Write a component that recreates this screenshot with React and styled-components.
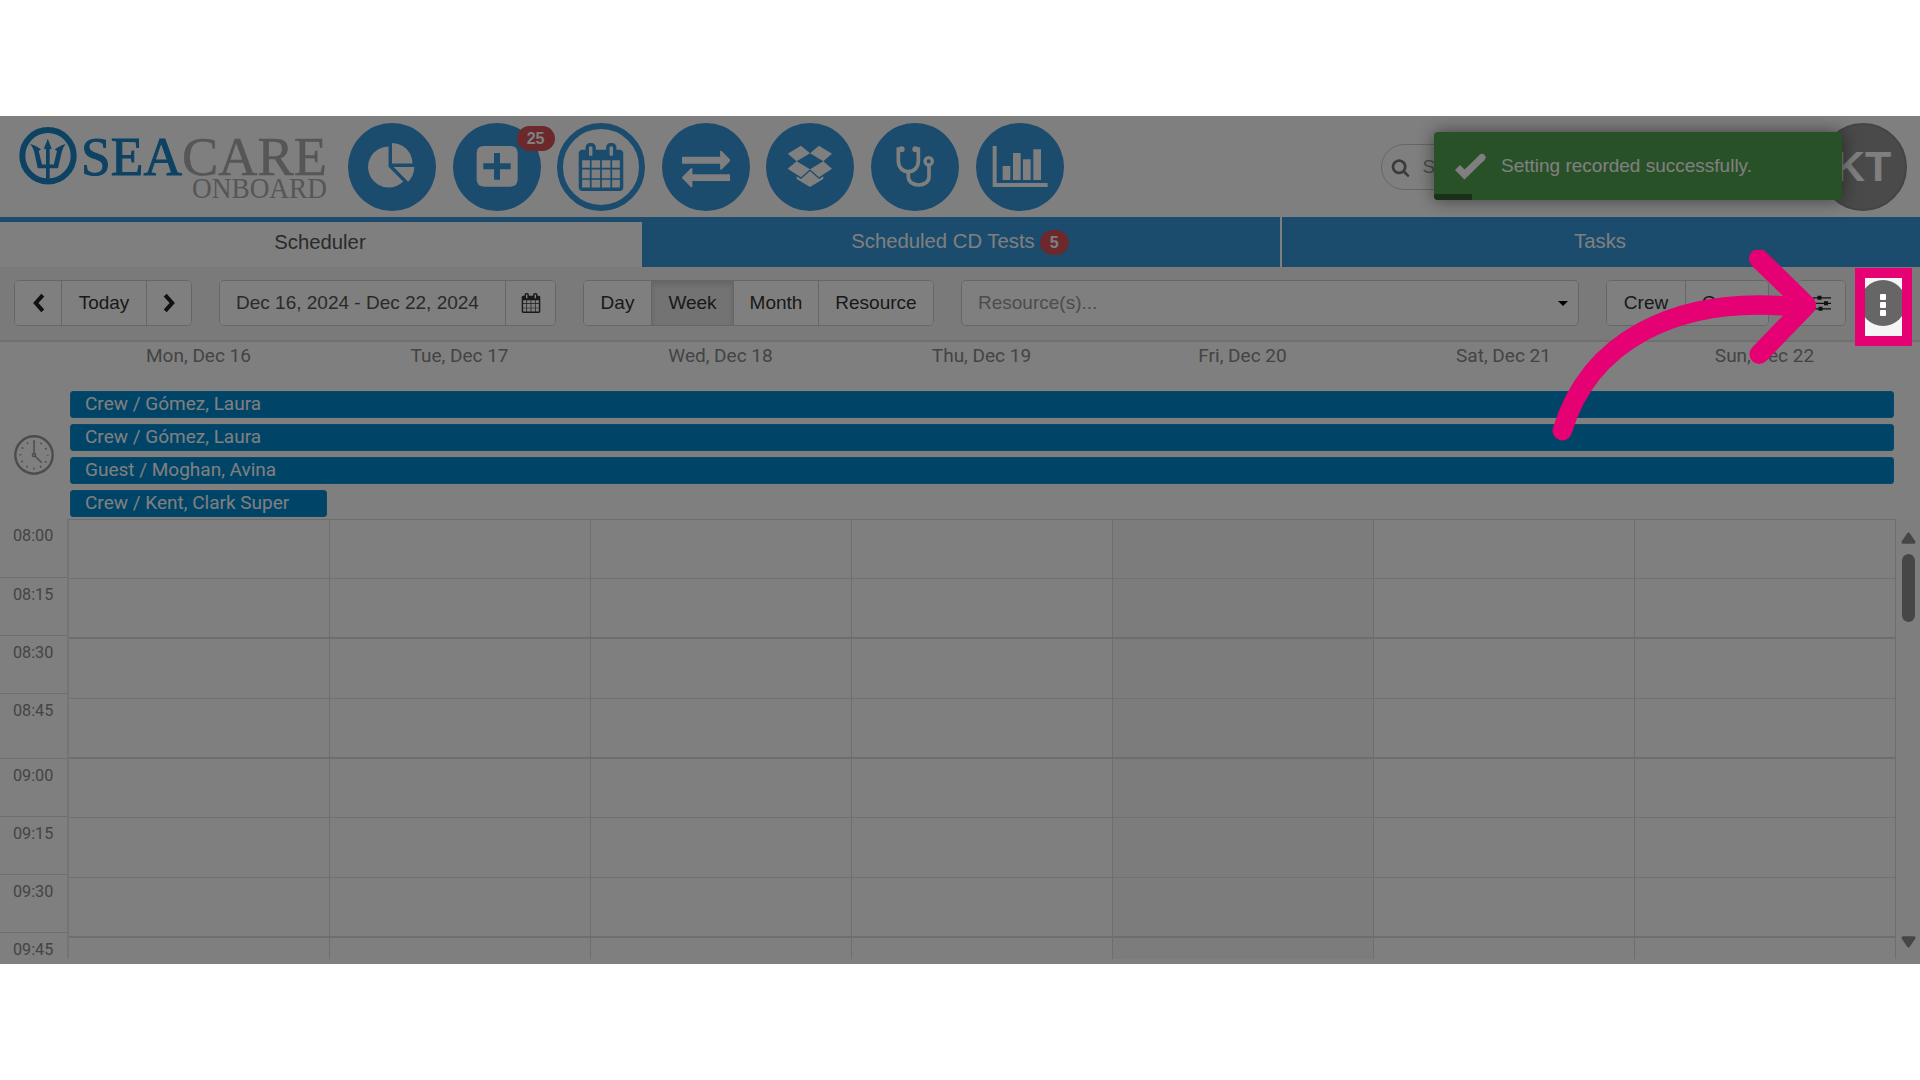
import React from 'react';
import styled, { createGlobalStyle } from 'styled-components';

const GlobalStyle = createGlobalStyle`
    * {
        box-sizing: border-box;
    }

    body {
        margin: 0;
        background: #fff;
        font-family: "Liberation Sans", Arial, sans-serif;
        color: #333;
    }
`

const days = ['Mon, Dec 16', 'Tue, Dec 17', 'Wed, Dec 18', 'Thu, Dec 19', 'Fri, Dec 20', 'Sat, Dec 21', 'Sun, Dec 22'];

const events = [
    { title: 'Crew / Gómez, Laura', span: 7 },
    { title: 'Crew / Gómez, Laura', span: 7 },
    { title: 'Guest / Moghan, Avina', span: 7 },
    { title: 'Crew / Kent, Clark Super', span: 1 },
];

const times = [
    { label: '08:00', height: 59 },
    { label: '08:15', height: 58 },
    { label: '08:30', height: 58 },
    { label: '08:45', height: 65 },
    { label: '09:00', height: 58 },
    { label: '09:15', height: 58 },
    { label: '09:30', height: 58 },
    { label: '09:45', height: 32 },
];

const slots = [
    { height: 59 },
    { height: 60, strong: true },
    { height: 60 },
    { height: 60, strong: true },
    { height: 59 },
    { height: 60 },
    { height: 60, strong: true },
    { height: 21, last: true },
];

const calendarPath = 'M192 1664h288v-288h-288v288zm352 0h320v-288h-320v288zm-352-352h288v-320h-288v320zm352 0h320v-320h-320v320zm-352-384h288v-288h-288v288zm736 736h320v-288h-320v288zm-384-736h320v-288h-320v288zm768 736h288v-288h-288v288zm-384-352h320v-320h-320v320zm-352-864v-288q0-13-9.500-22.500t-22.500-9.500h-64q-13 0-22.500 9.500t-9.500 22.500v288q0 13 9.500 22.500t22.500 9.500h64q13 0 22.500-9.500t9.500-22.500zm736 864h288v-320h-288v320zm-384-384h320v-288h-320v288zm384 0h288v-288h-288v288zm32-480v-288q0-13-9.500-22.500t-22.500-9.500h-64q-13 0-22.500 9.500t-9.500 22.500v288q0 13 9.500 22.500t22.500 9.500h64q13 0 22.500-9.500t9.500-22.500zm384-64v1280q0 52-38 90t-90 38h-1408q-52 0-90-38t-38-90v-1280q0-52 38-90t90-38h128v-96q0-66 47-113t113-47h64q66 0 113 47t47 113v96h384v-96q0-66 47-113t113-47h64q66 0 113 47t47 113v96h128q52 0 90 38t38 90z';

const CalendarIcon = ({ size }) => (
    <svg width={size} height={size} viewBox="0 0 1792 1792" fill="currentColor">
        <path fillRule="evenodd" d={calendarPath} />
    </svg>
)

const PieIcon = () => (
    <svg width="48" height="48" viewBox="0 0 1792 1792" fill="currentColor">
        <path d="M768 890l546 546q-106 108-247.500 168t-298.500 60q-209 0-385.500-103t-279.500-279.500-103-385.500 103-385.500 279.500-279.500 385.500-103v762zm187 6h773q0 157-60 298.500t-168 247.500zm709-128h-768v-768q209 0 385.500 103t279.500 279.500 103 385.500z" />
    </svg>
)

const PlusIcon = () => (
    <svg width="88" height="88" viewBox="338 39 264 264" fill="currentColor">
        <path fillRule="evenodd" d="M431 108h79q22 0 22 22v78q0 22-22 22h-79q-22 0-22-22v-78q0-22 22-22zM461 129v31h-32v18h32v31h18v-31h32v-18h-32v-31z" />
    </svg>
)

const ExchangeIcon = () => (
    <svg width="48.5" height="48.5" viewBox="0 0 1792 1792" fill="currentColor">
        <path d="M1792 1184v192q0 13-9.500 22.500t-22.500 9.500h-1376v192q0 13-9.500 22.500t-22.500 9.500q-12 0-24-10l-319-320q-9-9-9-22 0-14 9-23l320-320q9-9 23-9 13 0 22.500 9.500t9.500 22.500v192h1376q13 0 22.500 9.500t9.500 22.500zm0-544q0 14-9 23l-320 320q-9 9-23 9-13 0-22.500-9.500t-9.500-22.500v-192h-1376q-13 0-22.500-9.500t-9.500-22.500v-192q0-13 9.500-22.500t22.500-9.500h1376v-192q0-14 9-23t23-9q12 0 24 10l319 319q9 9 9 23z" />
    </svg>
)

const BoxIcon = () => (
    <svg width="88" height="88" viewBox="199 39 264 264" fill="currentColor">
        <path d="M304 107l27 23-40 24-27-23zM358 107l39 24-26 23-40-24zM291 154l40 24-27 24-40-26zM371 154l26 22-39 26-27-24zM331 183l27 24 13-8v8l-40 24-40-24v-8l13 8z" />
    </svg>
)

const StethoscopeIcon = () => (
    <svg width="88" height="88" viewBox="512 39 264 264" fill="none" stroke="currentColor" strokeWidth="11">
        <path d="M604 117h-10v36c0 20 14 32 30 32s30-12 30-32v-36h-9M624 186v14c0 16 14 25 31 25s31-9 31-25v-34" />
        <circle cx="685" cy="154" r="11" strokeWidth="10" />
        <circle cx="604" cy="118" r="9" fill="currentColor" stroke="none" />
        <circle cx="645" cy="118" r="9" fill="currentColor" stroke="none" />
    </svg>
)

const BarsIcon = () => (
    <svg width="88" height="88" viewBox="826 39 264 264" fill="currentColor">
        <path d="M876 108h12v111h153v12h-165zM906 168h23v42h-23zM937 129h23v81h-23zM967 148h23v62h-23zM998 118h23v92h-23z" />
    </svg>
)

const SearchIcon = () => (
    <svg width="19" height="19" viewBox="0 0 1792 1792" fill="#777">
        <path d="M1216 832q0-185-131.500-316.500t-316.500-131.500-316.500 131.500-131.500 316.500 131.500 316.500 316.500 131.500 316.500-131.500 131.500-316.500zm512 832q0 52-38 90t-90 38q-54 0-90-38l-343-342q-179 124-399 124-143 0-273.500-55.500t-225-150-150-225-55.500-273.500 55.500-273.500 150-225 225-150 273.500-55.500 273.500 55.500 225 150 150 225 55.500 273.500q0 220-124 399l343 343q37 37 37 90z" />
    </svg>
)

const Chevron = ({ next }) => (
    <svg width="13" height="20" viewBox="0 0 13 20" fill="none" stroke="#222" strokeWidth="4">
        <path d={next ? 'M2.200 2.200l7 7.800-7 7.800' : 'M10.800 2.200l-7 7.800 7 7.800'} />
    </svg>
)

const SlidersIcon = () => (
    <svg width="18" height="17" viewBox="0 0 18 17" fill="#222">
        <path d="M0 2.200h18v1.300h-18zM0 7.700h18v1.300h-18zM0 13.200h18v1.300h-18zM4.500 .8h4v4h-4zM11 6.300h4v4h-4zM5.500 11.800h4v4h-4z" />
    </svg>
)

const ClockIcon = () => (
    <svg width="40" height="40" viewBox="0 0 40 40" fill="none" stroke="#999" strokeWidth="1.500">
        <circle cx="20" cy="20" r="18.700" strokeWidth="2.400" />
        <circle cx="20" cy="20" r="13.500" strokeWidth="2" strokeDasharray="1.400 5.670" strokeDashoffset="0.700" />
        <circle cx="20" cy="20" r="1.600" />
        <path d="M20 5.500v13M21.200 21.200l6.600 6.600" />
    </svg>
)

const Logo = () => (
    <LogoSvg width="330" height="101" viewBox="0 0 330 101">
        <circle cx="48" cy="39.700" r="25.700" fill="none" stroke="#1c84c6" strokeWidth="6" />
        <path fill="#1c84c6" d="M30 28.300Q35.500 29 41 33.500L38.700 35L42 48.500H46V33H43.700L47.800 22.700L51.800 33H49.700V48.500H53.800L57 35L54.700 33.500Q60.500 29 65.700 28.300Q63 31 62 35L58 52.300H49.700V66H46V52.300H37.700L34 35Q33 31 30 28.300z" />
        <g fontFamily="Liberation Serif, serif">
            <text x="81" y="59.300" fontSize="54.500" textLength="101" lengthAdjust="spacingAndGlyphs" fill="#1c84c6" stroke="#1c84c6" strokeWidth="1">SEA</text>
            <text x="182" y="59.300" fontSize="54.500" textLength="145" lengthAdjust="spacingAndGlyphs" fill="#acacac" stroke="#acacac" strokeWidth="0.500">CARE</text>
            <text x="192" y="82" fontSize="28.500" textLength="135" lengthAdjust="spacingAndGlyphs" fill="#acacac">ONBOARD</text>
        </g>
    </LogoSvg>
)

const ResourceSelect = () => (
    <Select>
        Resource(s)...
        <Caret />
    </Select>
)

const Header = () => (
    <TopBar>
        <Logo />
        <Nav>
            <NavCircle><PieIcon /></NavCircle>
            <NavCircle>
                <PlusIcon />
                <CornerBadge>25</CornerBadge>
            </NavCircle>
            <NavCircle $active><CalendarIcon size={48} /></NavCircle>
            <NavCircle><ExchangeIcon /></NavCircle>
            <NavCircle><BoxIcon /></NavCircle>
            <NavCircle><StethoscopeIcon /></NavCircle>
            <NavCircle><BarsIcon /></NavCircle>
        </Nav>
        <Search>
            <SearchIcon />
            <span>Search</span>
        </Search>
        <Avatar>KT</Avatar>
    </TopBar>
)

const Toolbar = () => (
    <Bar>
        <Group>
            <Button $w={46}><Chevron /></Button>
            <Button $w={85}>Today</Button>
            <Button $w={45}><Chevron next /></Button>
        </Group>
        <Group $left={27}>
            <Button $w={285} $date>Dec 16, 2024 - Dec 22, 2024</Button>
            <Button $w={50}><CalendarIcon size={20} /></Button>
        </Group>
        <Group $left={27}>
            <Button $w={67}>Day</Button>
            <Button $w={82} $active>Week</Button>
            <Button $w={85}>Month</Button>
            <Button $w={115}>Resource</Button>
        </Group>
        <ResourceSelect />
        <Group $left={27}>
            <Button $w={78}>Crew</Button>
            <Button $w={83}>Guest</Button>
        </Group>
        <Group $left={28}>
            <Button $w={47}><SlidersIcon /></Button>
        </Group>
        <Kebab>
            <i />
            <i />
            <i />
        </Kebab>
    </Bar>
)

const Calendar = () => (
    <>
        <DayNames>
            {days.map(day => <span key={day}>{day}</span>)}
        </DayNames>
        <AllDay>
            <ClockCell><ClockIcon /></ClockCell>
            <EventList>
                {events.map((event, i) => (
                    <Event key={i} $span={event.span}>{event.title}</Event>
                ))}
            </EventList>
        </AllDay>
        <Body>
            <TimeColumn>
                {times.map(time => (
                    <Time key={time.label} $h={time.height}>{time.label}</Time>
                ))}
            </TimeColumn>
            {days.map((day, i) => (
                <DayColumn key={day} $today={i === 4}>
                    {slots.map((slot, j) => (
                        <Slot key={j} $h={slot.height} $strong={slot.strong} $last={slot.last} />
                    ))}
                </DayColumn>
            ))}
            <Scrollbar>
                <svg width="15" height="12" viewBox="0 0 15 12"><path d="M7.500 2L13 10.200H2z" fill="#8c8c8c" stroke="#8c8c8c" strokeWidth="3" strokeLinejoin="round" /></svg>
                <Thumb />
                <svg width="15" height="12" viewBox="0 0 15 12"><path d="M7.500 10L13 1.800H2z" fill="#8c8c8c" stroke="#8c8c8c" strokeWidth="3" strokeLinejoin="round" /></svg>
            </Scrollbar>
        </Body>
    </>
)

const App = () => (
    <>
        <GlobalStyle />
        <Page>
            <Screen>
                <Header />
                <Tabs>
                    <Tab $w={642} $active>Scheduler</Tab>
                    <Tab $w={638}>Scheduled CD Tests <Badge>5</Badge></Tab>
                    <Tab $w={640}>Tasks</Tab>
                </Tabs>
                <Toolbar />
                <Calendar />
                <Toast>
                    <svg width="34" height="28" viewBox="0 0 34 28" fill="none" stroke="#fff" strokeWidth="7" strokeLinecap="round">
                        <path d="M4.500 15.500l7 7L29 5.500" strokeLinecap="butt" />
                        <path d="M28.500 6l.5-.5" />
                    </svg>
                    Setting recorded successfully.
                </Toast>
                <Spotlight />
                <Arrow viewBox="0 0 264 191">
                    <path d="M10.300 180.700C37 92 122 46 240 56.500" />
                    <path d="M206.700 8.700l47.800 46.500-47.300 49" />
                </Arrow>
            </Screen>
        </Page>
    </>
)

const Page = styled.div`
    width: 1920px;
    height: 1080px;
    padding-top: 116px;
    background: #fff;
    overflow: hidden;
`

const Screen = styled.div`
    position: relative;
    height: 848px;
    overflow: hidden;
    background: #fff;
`

const TopBar = styled.header`
    display: flex;
    height: 101px;
`

const LogoSvg = styled.svg`
    flex: none;
    overflow: visible;
`

const Nav = styled.nav`
    display: flex;
    gap: 16.600px;
    margin-left: 18px;
    padding-top: 7px;
`

const NavCircle = styled.div`
    position: relative;
    display: flex;
    align-items: center;
    justify-content: center;
    width: 88px;
    height: 88px;
    border-radius: 50%;
    color: ${props => props.$active ? '#3697da' : '#fff'};
    background: ${props => props.$active ? '#fff' : '#3697da'};
    border: ${props => props.$active ? '6px solid #3697da' : 'none'};
`

const Badge = styled.span`
    display: flex;
    align-items: center;
    justify-content: center;
    height: 25px;
    min-width: 29px;
    margin: 2px 0 0 5px;
    border-radius: 13px;
    background: #d75256;
    color: #fff;
    font-size: 16px;
    font-weight: bold;
`

const CornerBadge = styled(Badge)`
    position: absolute;
    top: 3px;
    left: 64px;
    width: 38px;
    margin: 0;
`

const Search = styled.div`
    display: flex;
    align-items: center;
    gap: 13px;
    width: 320px;
    height: 46px;
    margin: 28px 0 0 317px;
    padding-left: 9px;
    border: 1px solid #ccc;
    border-radius: 23px;
    color: #999;
    font-size: 19px;
`

const Avatar = styled.div`
    width: 88px;
    height: 88px;
    margin: 7px 0 0 118px;
    border: 2px solid #888;
    border-radius: 50%;
    background: #949494;
    color: #fff;
    font-size: 43px;
    font-weight: bold;
    line-height: 83px;
    text-align: center;
`

const Tabs = styled.div`
    display: flex;
    height: 50px;
    background: #3697da;
`

const Tab = styled.div`
    display: flex;
    align-items: center;
    justify-content: center;
    width: ${props => props.$w}px;
    margin-top: ${props => props.$active ? '5px' : 0};
    padding: ${props => props.$active ? '0 2px 5px 0' : '0 2px 1px 0'};
    font-size: 20.300px;
    color: ${props => props.$active ? '#555' : '#fff'};
    background: ${props => props.$active ? '#fff' : 'transparent'};

    & + & + & {
        border-left: 2px solid #fff;
    }
`

const Bar = styled.div`
    display: flex;
    align-items: flex-start;
    height: 75px;
    padding: 13px 14px 0;
    background: #f5f5f5;
    border-bottom: 2px solid #e0e0e0;
`

const Group = styled.div`
    display: flex;
    flex: none;
    margin-left: ${props => props.$left || 0}px;
    border: 1px solid #ccc;
    border-radius: 5px;
    background: #fff;
    overflow: hidden;
`

const Button = styled.div`
    display: flex;
    align-items: center;
    justify-content: ${props => props.$date ? 'flex-start' : 'center'};
    width: ${props => props.$w}px;
    height: 44px;
    padding-left: ${props => props.$date ? '16px' : 0};
    font-size: 19px;
    color: ${props => props.$date ? '#555' : '#333'};
    background: ${props => props.$active ? '#e6e6e6' : '#fff'};
    box-shadow: ${props => props.$active ? 'inset 0 3px 5px rgba(0, 0, 0, .125)' : 'none'};

    & + & {
        border-left: 1px solid #ccc;
    }
`

const Select = styled.div`
    display: flex;
    flex: none;
    align-items: center;
    justify-content: space-between;
    width: 618px;
    height: 46px;
    margin-left: 27px;
    padding: 0 10px 0 16px;
    border: 1px solid #ccc;
    border-radius: 5px;
    background: #fff;
    color: #999;
    font-size: 19px;
`

const Caret = styled.span`
    border: 5px solid transparent;
    border-top-color: #000;
    border-bottom: 0;
`

const Kebab = styled.div`
    display: flex;
    flex: none;
    flex-direction: column;
    align-items: center;
    justify-content: center;
    gap: 2px;
    width: 46px;
    height: 46px;
    margin-left: 14px;
    padding-top: 4px;
    border-radius: 50%;
    background: #666;

    i {
        width: 6px;
        height: 6px;
        border-radius: 1px;
        background: #fff;
    }
`

const DayNames = styled.div`
    display: grid;
    grid-template-columns: repeat(7, 261px);
    height: 49px;
    padding: 2px 0 0 68px;
    font-family: Roboto, sans-serif;
    font-size: 19px;
    color: #888;
    text-align: center;
`

const AllDay = styled.div`
    display: flex;
    height: 128px;
`

const ClockCell = styled.div`
    width: 70px;
    padding: 44px 0 0 14px;
`

const EventList = styled.div`
    display: flex;
    flex-direction: column;
    gap: 6px;
`

const Event = styled.div`
    width: ${props => props.$span === 7 ? 1824 : 257}px;
    height: 27px;
    padding-left: 14px;
    border: 1px solid #0d93d0;
    border-radius: 3px;
    background: #0088ce;
    color: #fff;
    font-family: Roboto, sans-serif;
    font-size: 19px;
    line-height: 23px;
`

const Body = styled.div`
    display: flex;
    height: 440px;
    overflow: hidden;
`

const TimeColumn = styled.div`
    flex: none;
    width: 69px;
    border-right: 2px solid #e8e8e8;
`

const Time = styled.div`
    height: ${props => props.$h}px;
    padding: 7px 0 0 13px;
    border-bottom: 1px solid #ddd;
    color: #888;
    font-family: Roboto, sans-serif;
    font-size: 16.200px;
    line-height: 20px;
`

const DayColumn = styled.div`
    flex: none;
    width: 261px;
    border-top: 1px solid #ddd;
    border-right: 1px solid #ddd;
    background: ${props => props.$today ? '#f8f8f8' : '#fff'};
`

const Slot = styled.div`
    height: ${props => props.$h}px;
    border-bottom: ${props => props.$last ? 'none' : props.$strong ? '2px solid #ddd' : '1px solid #e2e2e2'};
`

const Scrollbar = styled.div`
    display: flex;
    flex-direction: column;
    align-items: center;
    width: 24px;
    padding-top: 13px;
    background: #fcfcfc;

    svg:last-child {
        margin-top: 314px;
    }
`

const Thumb = styled.div`
    width: 13px;
    height: 68px;
    margin-top: 10px;
    flex: none;
    border-radius: 7px;
    background: #8c8c8c;
`

const Toast = styled.div`
    position: absolute;
    top: 16px;
    left: 1434px;
    display: flex;
    align-items: center;
    gap: 14px;
    width: 408px;
    height: 68px;
    padding-left: 19px;
    border-radius: 4px;
    background: #51a351;
    box-shadow: 0 0 18px rgba(0, 0, 0, .5);
    color: #fff;
    font-size: 19px;
    overflow: hidden;

    &::after {
        content: '';
        position: absolute;
        left: 0;
        bottom: 0;
        width: 38px;
        height: 6px;
        background: #316231;
    }
`

/* the spread shadow dims everything outside of the highlighted button */
const Spotlight = styled.div`
    position: absolute;
    top: 152px;
    left: 1855px;
    width: 57px;
    height: 78px;
    border: 10px solid #e50073;
    box-shadow: 0 0 0 2000px rgba(0, 0, 0, .5);
`

const Arrow = styled.svg`
    position: absolute;
    top: 134px;
    left: 1552px;
    width: 264px;
    height: 191px;
    fill: none;
    stroke: #e50073;
    stroke-width: 19.500px;
    stroke-linecap: round;
    stroke-linejoin: round;
`

export default App;
